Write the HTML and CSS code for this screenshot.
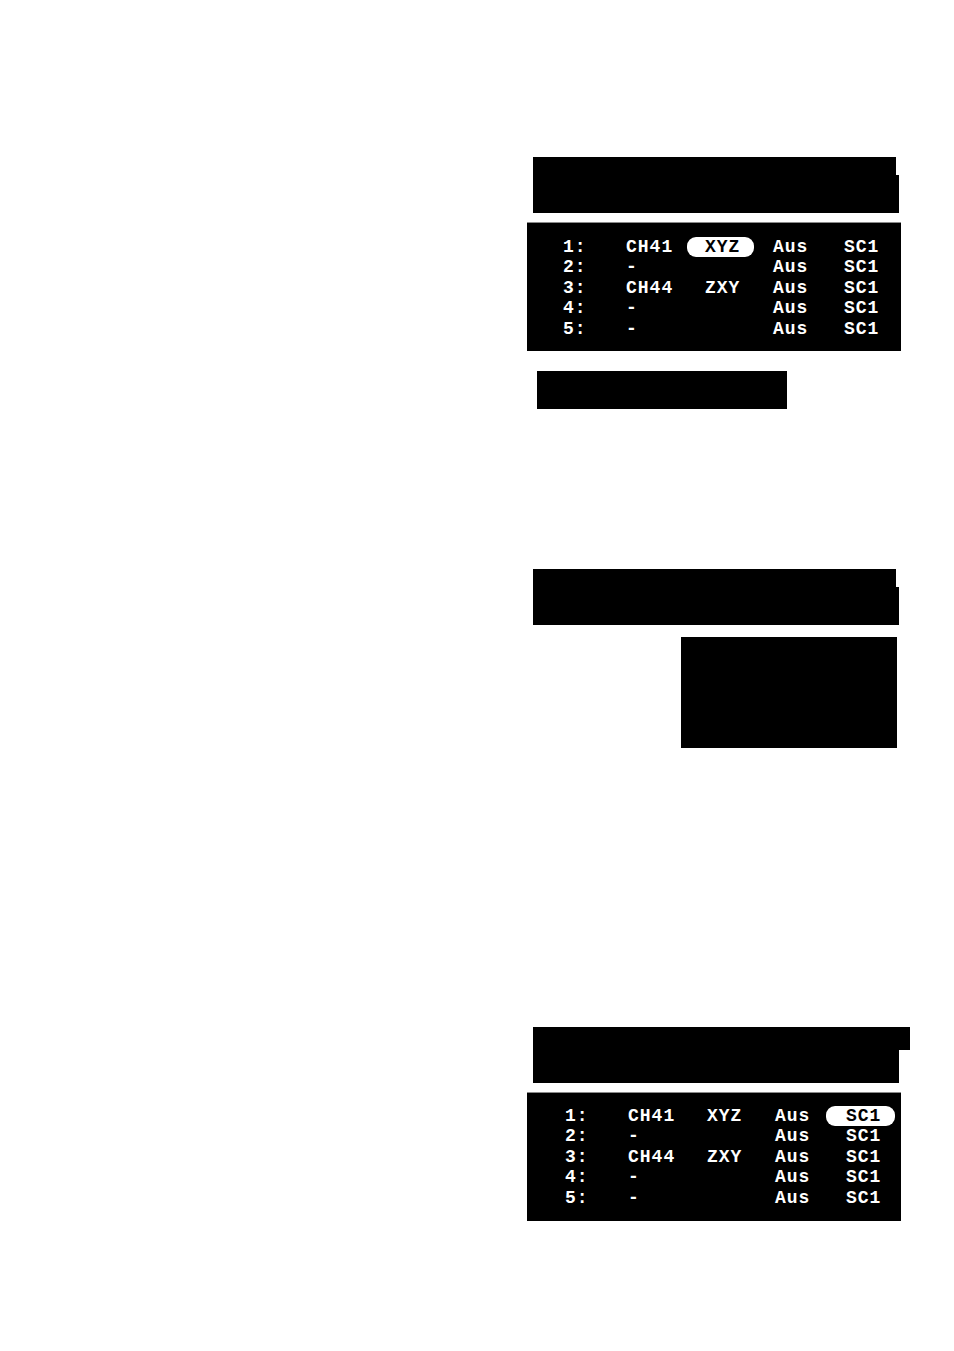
FILE: index.html
```html
<!DOCTYPE html>
<html lang="de">
<head>
  <meta charset="UTF-8">
  <meta name="viewport" content="width=device-width, initial-scale=1.0">
  <title>Timer-Liste</title>
  <link rel="stylesheet" href="styles.css">
</head>
<body>
  <div class="column">

    <!-- Bildschirm 1: Auswahl Sendername -->
    <div class="title-bar notch-small"></div>
    <div class="screen">
      <div class="row"><span>1:</span><span>CH41</span><span><span class="mark mark-name">XYZ</span></span><span>Aus</span><span>SC1</span></div>
      <div class="row"><span>2:</span><span>-</span><span></span><span>Aus</span><span>SC1</span></div>
      <div class="row"><span>3:</span><span>CH44</span><span>ZXY</span><span>Aus</span><span>SC1</span></div>
      <div class="row"><span>4:</span><span>-</span><span></span><span>Aus</span><span>SC1</span></div>
      <div class="row"><span>5:</span><span>-</span><span></span><span>Aus</span><span>SC1</span></div>
    </div>
    <div class="key-bar"></div>

    <!-- Bildschirm 2 -->
    <div class="title-bar notch-small second"></div>
    <div class="side-box"></div>

    <!-- Bildschirm 3: Auswahl Ausgang -->
    <div class="title-bar notch-wide third"></div>
    <div class="screen screen-low">
      <div class="row"><span>1:</span><span>CH41</span><span>XYZ</span><span>Aus</span><span><span class="mark mark-out">SC1</span></span></div>
      <div class="row"><span>2:</span><span>-</span><span></span><span>Aus</span><span>SC1</span></div>
      <div class="row"><span>3:</span><span>CH44</span><span>ZXY</span><span>Aus</span><span>SC1</span></div>
      <div class="row"><span>4:</span><span>-</span><span></span><span>Aus</span><span>SC1</span></div>
      <div class="row"><span>5:</span><span>-</span><span></span><span>Aus</span><span>SC1</span></div>
    </div>

  </div>
</body>
</html>
```

FILE: styles.css
```css
body {
  margin: 0;
  padding: 0;
  background-color: #fff;
  font-family: "Liberation Mono", "Courier New", monospace;
}
.column {
  width: 384px;
  margin-left: 527px;
  padding-top: 157px;
}
.title-bar {
  position: relative;
  width: 363px;
  height: 56px;
  margin-left: 6px;
  background-color: #000;
}
.notch-small::after {
  content: "";
  position: absolute;
  right: -3px;
  top: 18px;
  bottom: 0;
  width: 3px;
  background-color: #000;
}
.notch-wide {
  width: 366px;
}
.notch-wide::after {
  content: "";
  position: absolute;
  right: -11px;
  top: 0;
  height: 23px;
  width: 11px;
  background-color: #000;
}
.screen {
  width: 374px;
  height: 129px;
  box-sizing: border-box;
  margin-top: 9px;
  padding-top: 14px;
  background-color: #000;
  border-top: 1px solid #8a8a8a;
  color: #fff;
  font-size: 18px;
  font-weight: bold;
  letter-spacing: 1px;
}
.row {
  display: grid;
  grid-template-columns: 63px 79px 68px 71px 1fr;
  padding-left: 36px;
  height: 20.4px;
  line-height: 20.4px;
}
.screen-low {
  padding-top: 13px;
}
.screen-low .row {
  padding-left: 38px;
}
.mark {
  background-color: #fff;
  color: #000;
  border-radius: 9px;
  padding: 0 14px 0 18px;
  margin-left: -18px;
}
.mark-out {
  padding: 0 14px 0 20px;
  margin-left: -20px;
}
.key-bar {
  width: 250px;
  height: 38px;
  margin-top: 20px;
  margin-left: 10px;
  background-color: #000;
}
.second {
  margin-top: 160px;
}
.side-box {
  width: 216px;
  height: 111px;
  margin-top: 12px;
  margin-left: 154px;
  background-color: #000;
}
.third {
  margin-top: 279px;
}
```
